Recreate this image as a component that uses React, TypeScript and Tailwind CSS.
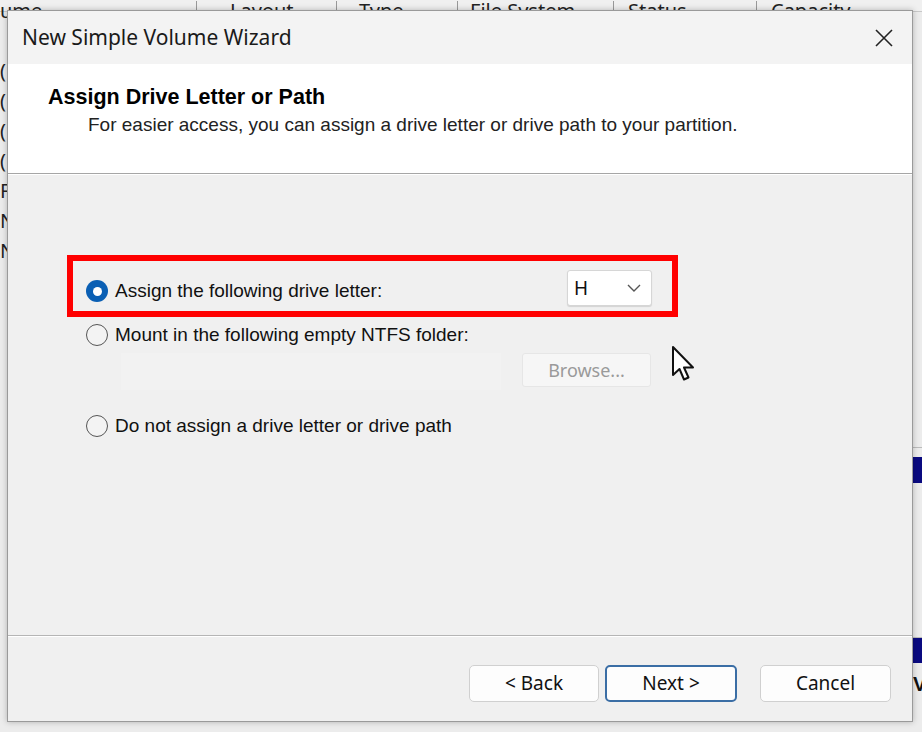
import React from "react";

const sans = { fontFamily: '"Liberation Sans", Arial, sans-serif' };
const ui = { fontFamily: '"Noto Sans", "Open Sans", sans-serif' };

function Radio({ checked }: { checked?: boolean }) {
  if (checked) {
    return (
      <span className="flex h-[22px] w-[22px] shrink-0 items-center justify-center rounded-full bg-[#0a5fb4]">
        <span className="h-[9px] w-[9px] rounded-full bg-white" />
      </span>
    );
  }
  return <span className="h-[22px] w-[22px] shrink-0 rounded-full border-[1.5px] border-[#555] bg-[#f3f3f3]" />;
}

function Cursor() {
  return (
    <svg width="26" height="38" viewBox="0 0 26 38" className="block">
      <path
        d="M2 2 L2 30 L8.5 24 L13 34.5 L17.5 32.5 L13 22.5 L22 22.5 Z"
        fill="#fff"
        stroke="#111"
        strokeWidth="2"
        strokeLinejoin="round"
      />
    </svg>
  );
}

export default function App() {
  return (
    <div className="relative h-[732px] w-[922px] overflow-hidden bg-[#ececec]" style={sans}>
      {/* background window (Disk Management) */}
      <div className="flex h-[12px] items-end border-b border-[#c8c8c8] bg-[#f0f0f0] text-[20px] leading-[20px] text-[#222]" style={ui}>
        <div className="-mb-[10px] flex w-full">
          <span className="w-[197px] border-r border-[#999] pl-[0px]">ume</span>
          <span className="w-[140px] border-r border-[#999] pl-[33px]">Layout</span>
          <span className="w-[121px] border-r border-[#999] pl-[22px]">Type</span>
          <span className="w-[156px] border-r border-[#999] pl-[12px]">File System</span>
          <span className="w-[143px] border-r border-[#999] pl-[14px]">Status</span>
          <span className="pl-[14px]">Capacity</span>
        </div>
      </div>
      <div className="flex">
        <div className="flex w-[8px] flex-col pt-[44px] text-[20px] leading-[30px] text-[#222]" style={ui}>
          <span>(</span>
          <span>(</span>
          <span>(</span>
          <span>(</span>
          <span>F</span>
          <span>N</span>
          <span>N</span>
        </div>
      </div>
      <div className="absolute left-[913px] top-[447px] flex w-[9px] flex-col">
        <div className="h-[10px] border-t border-[#bbb]" />
        <div className="h-[26px] bg-[#0a0a80]" />
        <div className="h-[155px] border-b border-[#bbb]" />
        <div className="h-[25px] bg-[#0a0a80]" />
        <div className="pt-[10px] text-[20px] font-bold leading-[22px] text-[#111]">V</div>
      </div>

      {/* dialog */}
      <div className="absolute left-[7px] top-[10px] flex h-[712px] w-[906px] flex-col border border-[#9a9a9a] bg-[#f0f0f0] shadow-[0_0_6px_rgba(0,0,0,0.25)]">
        {/* title bar */}
        <div className="flex h-[53px] shrink-0 items-center justify-between bg-[#f3f3f3] pl-[14px] pr-[18px]">
          <span className="text-[21px] text-[#1a1a1a]" style={ui}>
            New Simple Volume Wizard
          </span>
          <svg width="20" height="20" viewBox="0 0 20 20">
            <path d="M2 2 L18 18 M18 2 L2 18" stroke="#222" strokeWidth="1.6" />
          </svg>
        </div>
        {/* header */}
        <div className="flex h-[109px] shrink-0 flex-col bg-white pt-[20px]">
          <div className="pl-[40px] text-[21.5px] font-bold leading-[26px] text-[#000]">Assign Drive Letter or Path</div>
          <div className="pl-[80px] pt-[3px] text-[19px] leading-[24px] text-[#222]">
            For easier access, you can assign a drive letter or drive path to your partition.
          </div>
        </div>
        <div className="h-[2px] shrink-0 border-t border-[#a6a6a6] bg-white" />
        {/* body */}
        <div className="flex flex-1 flex-col pl-[78px] pt-[95px] text-[19px] text-[#111]">
          <div className="relative flex h-[42px] items-center">
            <div className="pointer-events-none absolute -left-[19px] -top-[15px] h-[62px] w-[611px] border-[6px] border-[#ff0000]" />
            <Radio checked />
            <span className="pl-[7px]">Assign the following drive letter:</span>
            <div className="ml-auto mr-[260px] flex h-[36px] w-[85px] self-start items-center justify-between rounded-[3px] border border-[#d6d6d6] bg-white pl-[6px] pr-[10px] shadow-[0_1px_1px_rgba(0,0,0,0.12)]">
              <span className="text-[19px] text-[#111]" style={ui}>H</span>
              <svg width="14" height="8" viewBox="0 0 14 8">
                <path d="M1 1 L7 7 L13 1" fill="none" stroke="#555" strokeWidth="1.4" />
              </svg>
            </div>
          </div>
          <div className="flex h-[46px] items-center">
            <Radio />
            <span className="pl-[7px]">Mount in the following empty NTFS folder:</span>
          </div>
          <div className="-mt-[5px] flex h-[37px] items-start">
            <div className="ml-[35px] h-[37px] w-[380px] bg-[#f2f2f2]" />
            <div className="ml-[21px] flex h-[34px] w-[129px] items-center justify-center rounded-[3px] border border-[#e6e6e6] bg-[#f6f6f6] text-[18px] text-[#9a9a9a]" style={ui}>
              Browse...
            </div>
            <div className="ml-[20px] -mt-[8px]">
              <Cursor />
            </div>
          </div>
          <div className="flex h-[72px] items-center">
            <Radio />
            <span className="pl-[7px]">Do not assign a drive letter or drive path</span>
          </div>
        </div>
        <div className="h-[2px] shrink-0 border-t border-[#b5b5b5] bg-white" />
        {/* footer */}
        <div className="flex h-[84px] shrink-0 items-start justify-end bg-[#f0f0f0] pr-[21px] pt-[28px] text-[19px] text-[#111]" style={ui}>
          <button className="flex h-[37px] w-[130px] items-center justify-center rounded-[5px] border border-[#d0d0d0] bg-[#fdfdfd]">
            &lt; Back
          </button>
          <button className="ml-[6px] flex h-[37px] w-[132px] items-center justify-center rounded-[5px] border-2 border-[#3b6ea5] bg-[#fdfdfd]">
            Next &gt;
          </button>
          <button className="ml-[23px] flex h-[37px] w-[131px] items-center justify-center rounded-[5px] border border-[#d0d0d0] bg-[#fdfdfd]">
            Cancel
          </button>
        </div>
      </div>
    </div>
  );
}
